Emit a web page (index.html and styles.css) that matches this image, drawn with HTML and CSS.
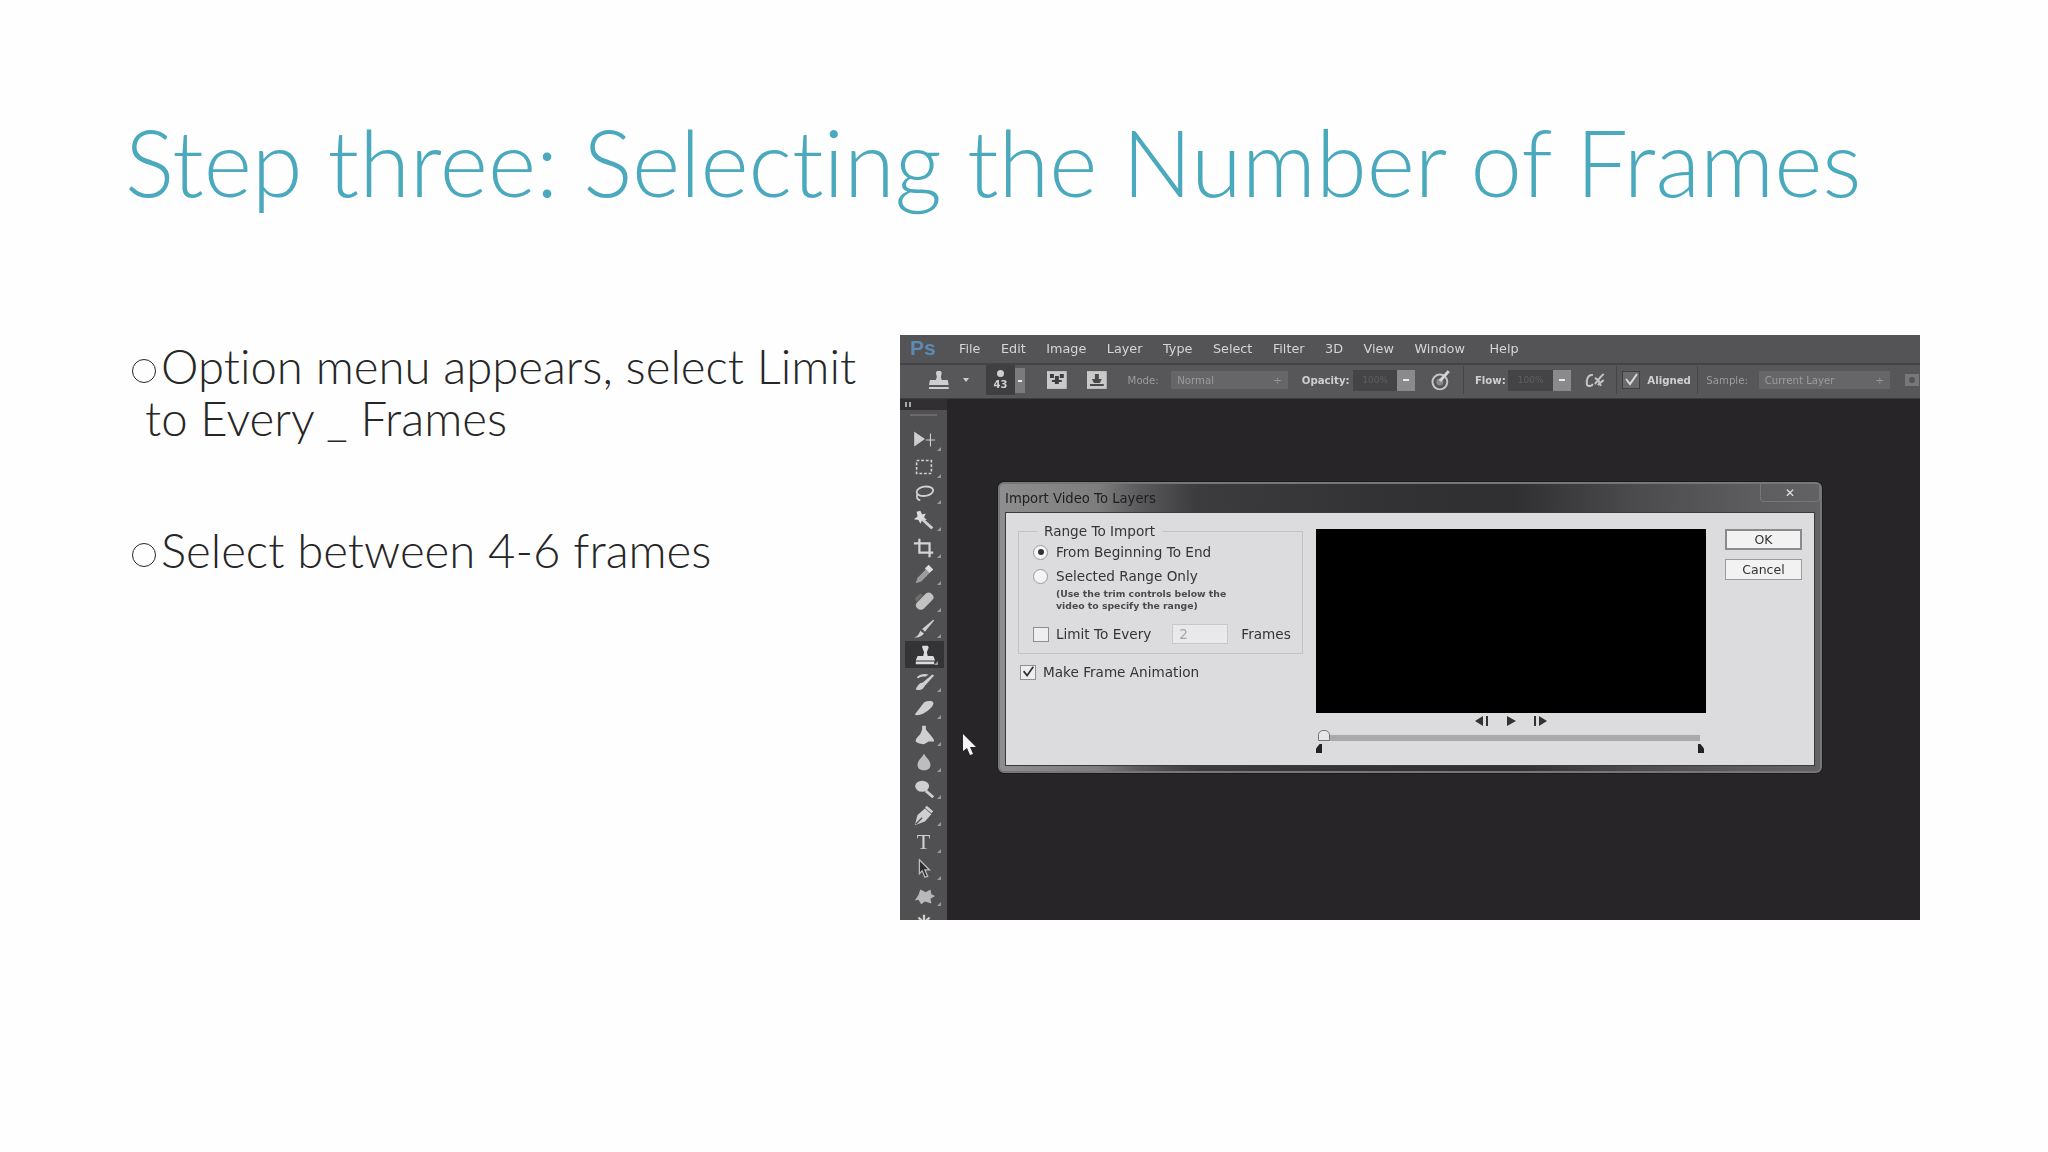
FILE: index.html
```html
<!DOCTYPE html>
<html lang="en">
<head>
    <meta charset="UTF-8">
    <title>Step three: Selecting the Number of Frames</title>
    <link rel="stylesheet" href="styles.css">
</head>
<body>
    <div class="slide">
        <h1 class="slide-title">Step three: Selecting the Number of Frames</h1>
        <div class="slide-body">
            <ul class="bullets">
                <li>Option menu appears, select Limit to Every _ Frames</li>
                <li>Select between 4-6 frames</li>
            </ul>

            <div class="ps-shot">
                <div class="menu-bar">
                    <span class="ps-logo">Ps</span>
                    <span>File</span><span>Edit</span><span>Image</span><span>Layer</span><span>Type</span>
                    <span>Select</span><span>Filter</span><span>3D</span><span>View</span><span>Window</span>
                    <span class="help">Help</span>
                </div>

                <div class="options-bar">
                    <svg class="opt-stamp" width="24" height="22" viewBox="0 0 24 22"><path d="M10 2h4l1 2-1 4 1 3h6l1 5H2l1-5h6l1-3-1-4zM2 18h20v2H2z" fill="#cfcfcf"/></svg>
                    <span class="opt-arrow"></span>
                    <div class="preset"><span class="preset-dot"></span><span class="preset-num">43</span></div>
                    <span class="preset-btn"></span>
                    <svg class="opt-clone" width="20" height="18" viewBox="0 0 20 18"><rect width="20" height="18" fill="#c9c9c9"/><path d="M3 3h4v4H3zM13 3h4v4h-4zM8 5h4v8H8zM5 9h10v2H5z" fill="#3d3d3d"/></svg>
                    <svg class="opt-sheet" width="20" height="18" viewBox="0 0 20 18"><rect width="20" height="18" fill="#c9c9c9"/><path d="M8 3h4v5h3l-2 4H7L5 8h3zM3 13h14v2H3z" fill="#4a4a4a"/></svg>
                    <span class="opt-label dim mode-label">Mode:</span>
                    <div class="select mode-select"><span>Normal</span><i>÷</i></div>
                    <span class="opt-label opacity-label">Opacity:</span>
                    <div class="field opacity-field">100%</div>
                    <span class="field-btn"></span>
                    <svg class="opt-air" width="22" height="22" viewBox="0 0 22 22"><circle cx="10" cy="13" r="7.5" fill="none" stroke="#c5c5c5" stroke-width="2"/><circle cx="10" cy="13" r="3.5" fill="#8a8a8a"/><path d="M10 12 19 2" stroke="#d5d5d5" stroke-width="3"/></svg>
                    <span class="opt-sep sep-a"></span>
                    <span class="opt-label flow-label">Flow:</span>
                    <div class="field flow-field">100%</div>
                    <span class="field-btn"></span>
                    <svg class="opt-cat" width="22" height="18" viewBox="0 0 22 18"><path d="M9 4C4 3 2 9 3 14c2 2 5 1 6-1M11 13c3-3 5-7 9-10M11 7c3 1 5 4 6 8M14 14l6-5" fill="none" stroke="#c5c5c5" stroke-width="2"/></svg>
                    <span class="opt-sep sep-b"></span>
                    <span class="opt-check"><svg width="16" height="14" viewBox="0 0 16 14"><path d="M3 6l4 5 7-10" fill="none" stroke="#d8d8d8" stroke-width="2"/></svg></span>
                    <span class="opt-label aligned-label">Aligned</span>
                    <span class="opt-sep sep-c"></span>
                    <span class="opt-label dim sample-label">Sample:</span>
                    <div class="select sample-select"><span>Current Layer</span><i>÷</i></div>
                    <svg class="opt-end" width="16" height="16" viewBox="0 0 16 16"><rect x="1" y="2" width="14" height="12" fill="#777"/><circle cx="8" cy="8" r="3" fill="#555"/></svg>
                </div>

                <div class="work-area">
                    <div class="toolbar">
                        <div class="toolbar-top"><span></span><span></span></div>
                        <div class="toolbar-grip"></div>
                        <div class="tool"><svg viewBox="0 0 26 26"><path d="M3 5l10 7-10 7zM20 6v14M15 13h10" fill="#cfcfcf" stroke="#cfcfcf" stroke-width="1.2"/></svg></div>
                        <div class="tool"><svg viewBox="0 0 26 26"><rect x="5" y="6" width="16" height="14" fill="none" stroke="#cfcfcf" stroke-width="1.8" stroke-dasharray="3 2"/></svg></div>
                        <div class="tool"><svg viewBox="0 0 26 26"><ellipse cx="14" cy="10" rx="9" ry="5" fill="none" stroke="#cfcfcf" stroke-width="2" transform="rotate(-8 14 10)"/><path d="M6 13c-2 4 0 6 3 7" fill="none" stroke="#cfcfcf" stroke-width="2"/></svg></div>
                        <div class="tool"><svg viewBox="0 0 26 26"><path d="M9 2l2 4 4-1-2 4 3 3-5 0-2 4-2-4-5-1 4-3-1-5z" fill="#dcdcdc"/><path d="M11 11l11 10" stroke="#cfcfcf" stroke-width="3"/></svg></div>
                        <div class="tool"><svg viewBox="0 0 26 26"><path d="M2 8h17v15M8 3v15h15" fill="none" stroke="#d5d5d5" stroke-width="2.4"/></svg></div>
                        <div class="tool"><svg viewBox="0 0 26 26"><path d="M4 23l2-6 9-9 4 4-9 9z" fill="#9c9c9c"/><path d="M14 7l4-4 5 5-4 4z" fill="#dedede"/></svg></div>
                        <div class="tool"><svg viewBox="0 0 26 26"><path d="M6 21c-3-3-2-5 0-7L15 5c3-2 5-1 7 1s2 4 0 6l-9 9c-2 2-5 2-7 0z" fill="#c2c2c2"/><path d="M3 10l6-5 3 2-7 7z" fill="#6d6d6d"/></svg></div>
                        <div class="tool"><svg viewBox="0 0 26 26"><path d="M11 14L23 4l1 1-10 12z" fill="#cfcfcf"/><path d="M2 23c3 0 5-2 7-7l4 3c-2 3-6 5-11 4z" fill="#cfcfcf"/></svg></div>
                        <div class="tool tool-active"><svg viewBox="0 0 26 26"><path d="M10 3h6l1 2-2 5 1 4h6l2 5H3l2-5h6l1-4-2-5zM3 20h20v3H3z" fill="#dcdcdc"/></svg></div>
                        <div class="tool"><svg viewBox="0 0 26 26"><path d="M5 8c4-4 9-4 13-3l-3 2c-3 0-6 0-8 2M4 21c5 2 8 0 10-4L24 6l-2-1-11 9c-2-1-5 3-7 7z" fill="#cfcfcf"/></svg></div>
                        <div class="tool"><svg viewBox="0 0 26 26"><path d="M3 20L13 7c4-2 9-2 10 0s-2 6-6 9C12 20 6 22 3 20z" fill="#cfcfcf"/></svg></div>
                        <div class="tool"><svg viewBox="0 0 26 26"><path d="M11 3h4v4l5 6c2 3 4 4 4 7H18l-5 3c-3 0-7-1-9-3 0-4 3-5 5-8l2-5z" fill="#cfcfcf"/></svg></div>
                        <div class="tool"><svg viewBox="0 0 26 26"><path d="M13 4c2 4 7 7 7 12 0 4-3 6-7 6s-7-2-7-6c0-5 5-8 7-12z" fill="#bdbdbd"/></svg></div>
                        <div class="tool"><svg viewBox="0 0 26 26"><ellipse cx="11" cy="10" rx="7.5" ry="6" fill="#cfcfcf"/><path d="M15 15l8 7" stroke="#cfcfcf" stroke-width="3"/></svg></div>
                        <div class="tool"><svg viewBox="0 0 26 26"><path d="M3 23l3-11 8-7 7 6-7 8z" fill="#cfcfcf"/><path d="M15 3l7 6" stroke="#cfcfcf" stroke-width="3"/><path d="M4 22l7-7" stroke="#4f4e50" stroke-width="1.5"/></svg></div>
                        <div class="tool"><span class="tool-t">T</span></div>
                        <div class="tool"><svg viewBox="0 0 26 26"><path d="M8 3l11 11h-5l3 7-3 1-3-7-3 3z" fill="#2d2c2e" stroke="#bcbcbc" stroke-width="1.4"/></svg></div>
                        <div class="tool"><svg viewBox="0 0 26 26"><path d="M3 18l4-6 2-6 6 3 5-3 1 5 4 2-5 3 1 5-7-2-4 3-3-5z" fill="#b8b8b8"/></svg></div>
                        <div class="tool"><svg viewBox="0 0 26 26"><path d="M13 4v18M4 13h18M7 7l12 12M19 7L7 19" stroke="#cfcfcf" stroke-width="2.5"/></svg></div>
                    </div>

                    <div class="canvas">
                        <svg class="cursor" width="15" height="21" viewBox="0 0 15 21"><path d="M1 0l13 13H8l3 7-3 1-3-7-4 3z" fill="#f4f4f4"/></svg>

                        <div class="dialog">
                            <div class="dialog-title">
                                <span>Import Video To Layers</span>
                                <span class="dialog-close">&#10005;</span>
                            </div>
                            <div class="dialog-body">
                                <div class="dialog-left">
                                    <fieldset class="range-group">
                                        <legend>Range To Import</legend>
                                        <div class="row row-first"><span class="radio radio-on"></span>From Beginning To End</div>
                                        <div class="row"><span class="radio"></span>Selected Range Only</div>
                                        <div class="hint">(Use the trim controls below the<br>video to specify the range)</div>
                                        <div class="row row-limit">
                                            <span class="check"></span>Limit To Every
                                            <span class="frames-input">2</span>
                                            <span class="frames-label">Frames</span>
                                        </div>
                                    </fieldset>
                                    <div class="row row-anim">
                                        <span class="check"><svg width="16" height="14" viewBox="0 0 16 14"><path d="M3 6l4 5 7-10" fill="none" stroke="#333" stroke-width="2"/></svg></span>Make Frame Animation
                                    </div>
                                </div>

                                <div class="dialog-video">
                                    <div class="video-box"></div>
                                    <div class="video-controls">
                                        <svg width="16" height="12" viewBox="0 0 16 12"><path d="M9 1v10L1 6zM12 1h2v10h-2z" fill="#333"/></svg>
                                        <svg width="12" height="12" viewBox="0 0 12 12"><path d="M2 1v10l9-5z" fill="#333"/></svg>
                                        <svg width="16" height="12" viewBox="0 0 16 12"><path d="M2 1h2v10H2zM7 1v10l8-5z" fill="#333"/></svg>
                                    </div>
                                    <div class="trim-track">
                                        <span class="trim-head"></span>
                                        <span class="trim-mark trim-in"></span>
                                        <span class="trim-mark trim-out"></span>
                                    </div>
                                </div>

                                <div class="dialog-buttons">
                                    <div class="btn btn-ok">OK</div>
                                    <div class="btn">Cancel</div>
                                </div>
                            </div>
                        </div>
                    </div>
                </div>
            </div>
        </div>
    </div>
</body>
</html>
```

FILE: styles.css
```css
html, body {
    margin: 0;
    height: 100%;
}
body {
    background-color: #fefefe;
    overflow: hidden;
    font-family: "Lato", "Liberation Sans", sans-serif;
}
.slide {
    height: 1152px;
    padding-left: 127px;
    box-sizing: border-box;
}
.slide-title {
    margin: 0 0 0 -2px;
    padding-top: 108px;
    height: 335px;
    box-sizing: border-box;
    font-size: 92.2px;
    line-height: 108px;
    font-weight: 300;
    font-variant-ligatures: none;
    color: #4aa9bd;
    white-space: nowrap;
}
.slide-body {
    display: flex;
}

/* left column */
.bullets {
    list-style: none;
    margin: 0;
    padding: 5px 0 0 0;
    width: 773px;
    flex-shrink: 0;
    font-size: 47.3px;
    line-height: 52px;
    font-weight: 300;
    font-variant-ligatures: none;
    color: #262626;
}
.bullets li {
    padding-left: 18px;
    width: 728px;
    text-indent: -13px;
    margin: 0 0 80px 0;
}
.bullets li::before {
    content: "";
    display: inline-block;
    width: 24px;
    height: 24px;
    margin-right: 5px;
    vertical-align: 1px;
    border: 1.6px solid #262626;
    border-radius: 50%;
    box-sizing: border-box;
}

/* photoshop screenshot */
.ps-shot {
    width: 1020px;
    height: 585px;
    flex-shrink: 0;
    display: flex;
    flex-direction: column;
    overflow: hidden;
    background-color: #272528;
    filter: blur(0.6px);
    font-family: "DejaVu Sans", sans-serif;
    color: #d0d0d0;
}
.menu-bar {
    height: 26px;
    padding-bottom: 2px;
    display: flex;
    align-items: center;
    gap: 20.5px;
    background-color: #545355;
    border-bottom: 2px solid #434244;
    font-size: 12.8px;
    color: #d6d6d6;
    flex-shrink: 0;
}
.ps-logo {
    width: 28.5px;
    padding-left: 10px;
    font-size: 21px;
    font-weight: bold;
    font-family: "Liberation Sans", sans-serif;
    color: #5b8bb5;
}
.help {
    margin-left: 4px;
}

.options-bar {
    height: 30px;
    padding-bottom: 3px;
    display: flex;
    align-items: center;
    background-color: #575658;
    border-bottom: 1px solid #3c3b3d;
    font-size: 10.2px;
    flex-shrink: 0;
}
.opt-stamp { margin-left: 27px; }
.opt-arrow {
    margin-left: 12px;
    border-left: 3px solid transparent;
    border-right: 3px solid transparent;
    border-top: 4px solid #cfcfcf;
}
.preset {
    margin-left: 17px;
    width: 30px;
    height: 30px;
    background-color: #3f3e40;
    display: flex;
    flex-direction: column;
    align-items: center;
    justify-content: center;
    font-size: 10px;
    font-weight: bold;
}
.preset-dot {
    width: 7px;
    height: 7px;
    margin-bottom: 2px;
    border-radius: 50%;
    background-color: #cfcfcf;
}
.preset-btn {
    position: relative;
    width: 10px;
    height: 25px;
    background-color: #7b7a7c;
}
.preset-btn::after {
    content: "";
    position: absolute;
    left: 3px;
    top: 12px;
    width: 4px;
    height: 2px;
    background-color: #e8e8e8;
}
.opt-clone { margin-left: 22px; }
.opt-sheet { margin-left: 20px; }
.opt-label { white-space: nowrap; font-weight: bold; color: #cfcfcf; }
.opt-label.dim { font-weight: normal; color: #9c9b9d; }
.mode-label { margin-left: 21px; width: 33px; }
.select {
    height: 18px;
    display: flex;
    align-items: center;
    justify-content: space-between;
    padding: 0 6px;
    box-sizing: border-box;
    background-color: #666567;
    color: #9c9b9d;
}
.select i { font-style: normal; }
.mode-select { margin-left: 11px; width: 118px; }
.opacity-label { margin-left: 14px; width: 52px; }
.field {
    height: 21px;
    width: 45px;
    line-height: 21px;
    text-align: center;
    background-color: #444345;
    color: #5f5e60;
    font-size: 9px;
}
.field-btn {
    position: relative;
    width: 18px;
    height: 21px;
    background-color: #8a898b;
}
.field-btn::after {
    content: "";
    position: absolute;
    left: 6px;
    top: 9px;
    width: 6px;
    height: 2px;
    background-color: #e8e8e8;
}
.opt-air { margin-left: 15px; }
.opt-sep {
    width: 1px;
    height: 28px;
    background-color: #454446;
}
.sep-a { margin-left: 11px; }
.flow-label { margin-left: 11px; width: 34px; }
.opt-cat { margin-left: 13px; }
.sep-b { margin-left: 11px; }
.opt-check {
    margin-left: 5px;
    width: 16px;
    height: 16px;
    background-color: #6a696b;
    border: 1px solid #3f3e40;
    display: flex;
    align-items: center;
    justify-content: center;
}
.aligned-label { margin-left: 7px; width: 42px; }
.sep-c { margin-left: 8px; }
.sample-label { margin-left: 8px; width: 47px; }
.sample-select { margin-left: 6px; width: 133px; }
.opt-end { margin-left: 14px; flex-shrink: 0; }

.work-area {
    flex: 1;
    display: flex;
    min-height: 0;
}
.toolbar {
    width: 47px;
    flex-shrink: 0;
    background-color: #504f51;
    overflow: hidden;
}
.toolbar-top {
    height: 11px;
    display: flex;
    gap: 2px;
    align-items: center;
    padding-left: 5px;
    background-color: #312f32;
}
.toolbar-top span {
    width: 2px;
    height: 5px;
    background-color: #a8a8a8;
}
.toolbar-grip {
    height: 2px;
    margin: 4px 10px 11px;
    background-color: #6a696b;
}
.tool {
    position: relative;
    height: 26.8px;
    display: flex;
    justify-content: center;
    align-items: center;
}
.tool svg {
    width: 24px;
    height: 24px;
}
.tool::after {
    content: "";
    position: absolute;
    right: 6px;
    bottom: 3px;
    border-left: 4px solid transparent;
    border-bottom: 4px solid #9a999b;
}
.tool-active {
    background-color: #343335;
    margin: 0 3px 0 5px;
}
.tool-t {
    font-family: "Liberation Serif", serif;
    font-size: 22px;
    color: #cfcfcf;
}

.canvas {
    flex: 1;
    position: relative;
}
.cursor {
    position: absolute;
    left: 15px;
    top: 335px;
}
.dialog {
    position: absolute;
    left: 51px;
    top: 83px;
    width: 824px;
    height: 291px;
    box-sizing: border-box;
    display: flex;
    flex-direction: column;
    padding: 0 5px 5px;
    border: 2px solid #77767a;
    border-radius: 6px;
    background: linear-gradient(90deg, #8e8e8e 0%, #7d7d7d 12%, #5a595b 17%, #3c3b3d 24%, #333234 45%, #2f2e30 62%, #4c4b4d 78%, #5d5c5e 92%, #626163 100%);
    box-shadow: 0 0 0 1px #1c1b1d;
}
.dialog-title {
    height: 28px;
    flex-shrink: 0;
    display: flex;
    align-items: center;
    justify-content: space-between;
    font-size: 13.2px;
    color: #1e1d1f;
}
.dialog-close {
    width: 60px;
    height: 18px;
    align-self: flex-start;
    margin-right: -5px;
    text-align: center;
    font-size: 12px;
    line-height: 18px;
    font-weight: bold;
    color: #e6e6e6;
    border: 1px solid #77767a;
    border-top: none;
    border-radius: 0 0 4px 4px;
    box-sizing: border-box;
}
.dialog-body {
    flex: 1;
    display: flex;
    padding: 16px 12px 0;
    background-color: #dcdbdd;
    border: 1px solid #3a393b;
    color: #343434;
    font-size: 13.6px;
}
.dialog-left {
    width: 285px;
    flex-shrink: 0;
}
.range-group {
    margin: -6px 0 0;
    padding: 0 0 0 14px;
    height: 131px;
    box-sizing: border-box;
    border: 1px solid #c3c2c4;
}
.range-group legend {
    margin-left: 4px;
    padding: 0 7px;
    line-height: 16px;
}
.row {
    display: flex;
    align-items: center;
    height: 24px;
    white-space: nowrap;
}
.row-first { margin-top: 1px; }
.radio {
    width: 15px;
    height: 15px;
    margin-right: 8px;
    box-sizing: border-box;
    border: 1.5px solid #9a999b;
    border-radius: 50%;
    background-color: #f4f4f4;
    display: flex;
    align-items: center;
    justify-content: center;
}
.radio-on::after {
    content: "";
    width: 6px;
    height: 6px;
    border-radius: 50%;
    background-color: #333;
}
.hint {
    margin: 0 0 0 23px;
    font-size: 9.3px;
    line-height: 12px;
    font-weight: bold;
    color: #4a4a4a;
}
.check {
    width: 16px;
    height: 15px;
    margin-right: 7px;
    box-sizing: border-box;
    border: 1.5px solid #8f8e90;
    background-color: #eeeeee;
    display: flex;
    align-items: center;
    justify-content: center;
}
.row-limit { margin-top: 11px; height: 22px; }
.frames-input {
    width: 56px;
    height: 20px;
    margin-left: 21px;
    padding-left: 6px;
    box-sizing: border-box;
    background-color: #e9e8ea;
    border: 1px solid #c8c7c9;
    color: #a5a4a6;
    line-height: 18px;
}
.frames-label { margin-left: 13px; }
.row-anim { margin-top: 7px; height: 22px; padding-left: 2px; }
.dialog-video {
    width: 390px;
    margin-left: 13px;
    flex-shrink: 0;
}
.video-box {
    height: 184px;
    background-color: #000;
}
.video-controls {
    display: flex;
    justify-content: center;
    align-items: center;
    gap: 15px;
    height: 14px;
    margin-top: 1px;
}
.trim-track {
    position: relative;
    height: 6px;
    margin: 7px 6px 0 7px;
    background-color: #a9a8aa;
}
.trim-head {
    position: absolute;
    left: -5px;
    top: -5px;
    width: 12px;
    height: 11px;
    box-sizing: border-box;
    background-color: #e6e6e6;
    border: 1px solid #777;
    border-radius: 5px 5px 0 0;
}
.trim-mark {
    position: absolute;
    top: 9px;
    width: 6px;
    height: 9px;
    background-color: #222;
}
.trim-in { left: -7px; clip-path: polygon(60% 0, 100% 0, 100% 100%, 0 100%, 0 50%); }
.trim-out { right: -4px; clip-path: polygon(0 0, 40% 0, 100% 50%, 100% 100%, 0 100%); }
.dialog-buttons {
    margin-left: 19px;
    width: 77px;
    display: flex;
    flex-direction: column;
    gap: 9px;
}
.btn {
    height: 21px;
    box-sizing: border-box;
    border: 1px solid #9a999b;
    background-color: #f2f2f2;
    text-align: center;
    line-height: 19px;
    font-size: 12.5px;
    color: #333;
}
.btn-ok {
    border: 2px solid #8a898b;
    line-height: 17px;
}
```
